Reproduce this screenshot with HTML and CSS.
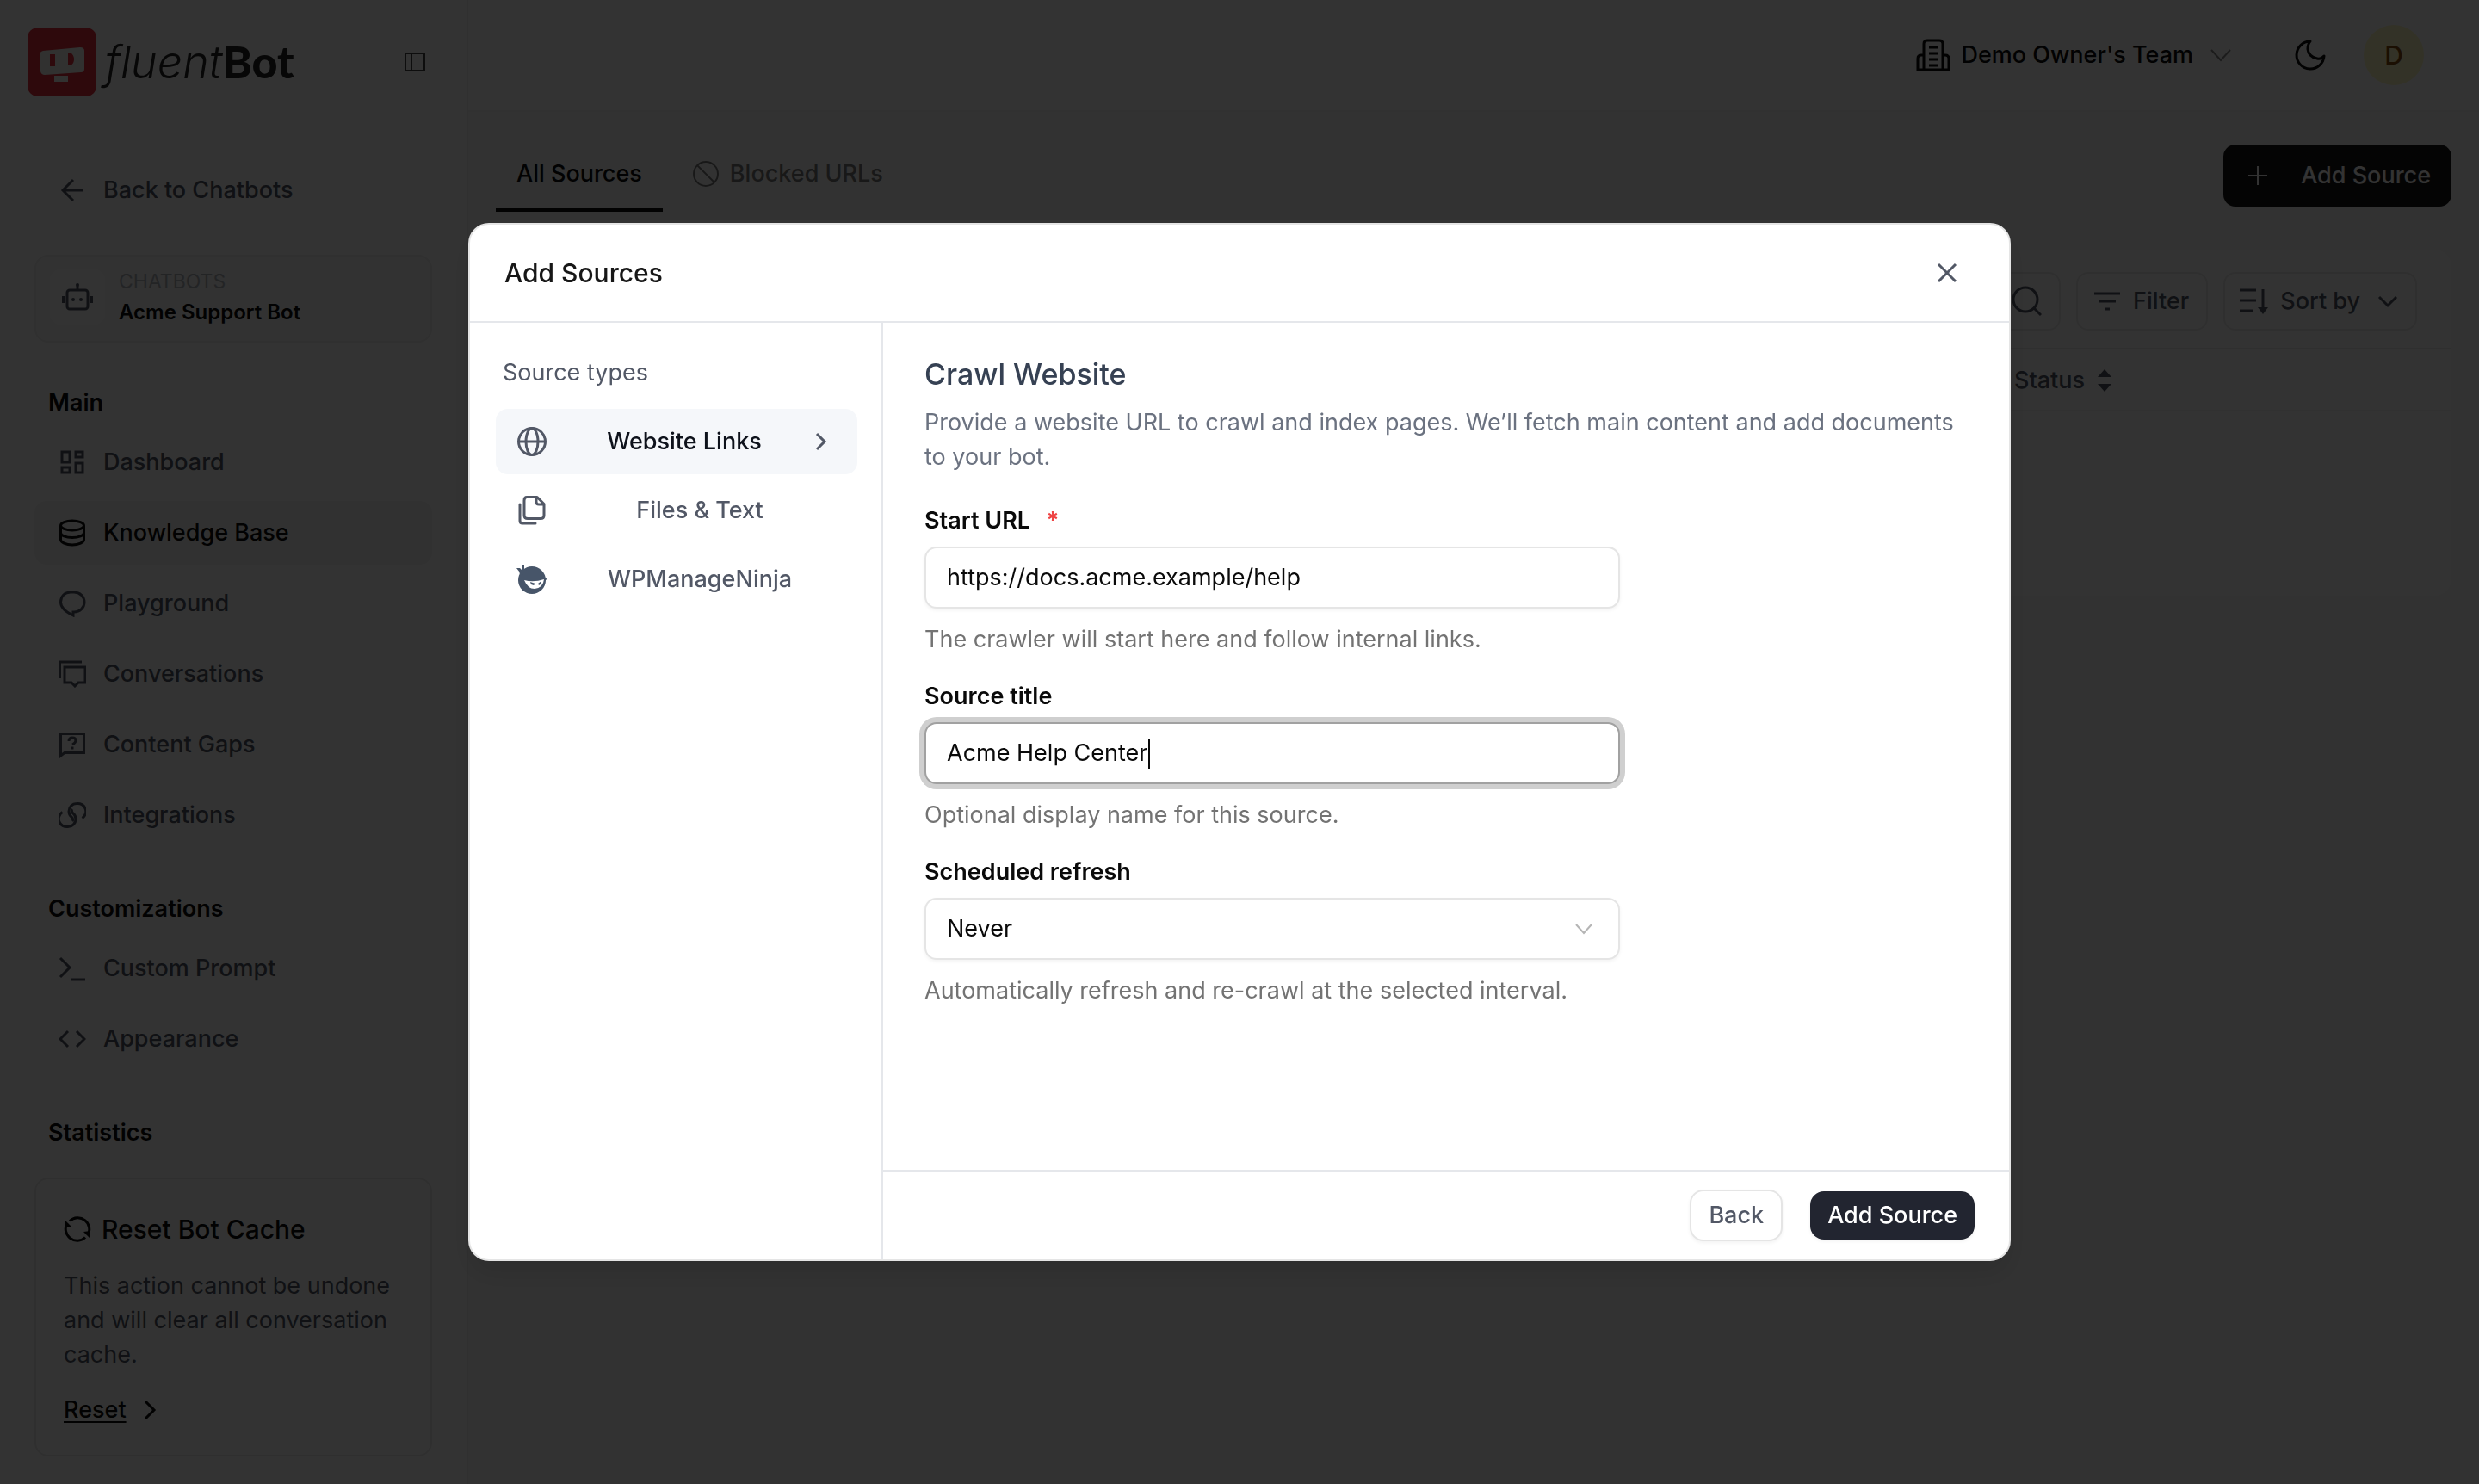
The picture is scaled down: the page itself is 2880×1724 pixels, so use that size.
FILE: index.html
```html
<!DOCTYPE html>
<html lang="en">
<head>
<meta charset="utf-8">
<title>fluentBot – Knowledge Base</title>
<link rel="stylesheet" href="styles.css">
</head>
<body>
<div class="app">
  <aside class="sidebar">
    <div class="brand">
      <svg class="brand-mark" viewBox="0 0 80 80" aria-hidden="true">
        <rect width="80" height="80" rx="12" fill="#e5303c"/>
        <path fill="#f3f6f1" d="M18 27 61 23q5 0 5 4v21q0 4-4 4L20 55q-4 0-5-4l-1-19q0-4 4-5zM31 56h16v7H31z"/>
        <path fill="#e5303c" d="M26 31h6v14h-6zM47 29h3q4 3 4 8t-4 7h-3z"/>
      </svg>
      <span class="brand-name"><i>fluent</i><b>Bot</b></span>
      <button class="icon-button" type="button" aria-label="Collapse sidebar">
        <svg class="collapse-icon" viewBox="0 0 24 24" fill="none" stroke="currentColor" stroke-width="2"><path d="M1 2h22v20H1zM8 2v20"/></svg>
      </button>
    </div>

    <a class="nav-item back-link" href="#">
      <svg class="icon" viewBox="0 0 32 32" fill="none" stroke="currentColor" stroke-width="3"><path d="M29 16H5M17 4 5 16l12 12"/></svg>
      Back to Chatbots
    </a>

    <a class="bot-card" href="#">
      <span class="bot-tile">
        <svg class="bot-icon" viewBox="0 0 36 36" fill="none" stroke="currentColor" stroke-width="3"><rect x="6" y="10" width="24" height="22" rx="3"/><path d="M18 10V5M1.500 17v8M34.500 17v8"/><g fill="currentColor" stroke="none"><circle cx="18" cy="4" r="2"/><circle cx="13" cy="21" r="2"/><circle cx="22" cy="21" r="2"/></g></svg>
      </span>
      <span class="bot-text"><span class="bot-kind">CHATBOTS</span><span class="bot-name">Acme Support Bot</span></span>
    </a>

    <nav class="nav" aria-label="Chatbot">
      <h2 class="nav-title">Main</h2>
      <a class="nav-item" href="#">
        <svg class="icon" viewBox="0 0 32 32" fill="none" stroke="currentColor" stroke-width="3"><path d="M4 4h9v12H4zM20 4h8v6h-8zM20 17h8v11h-8zM4 22h9v6H4z"/></svg>
        Dashboard
      </a>
      <a class="nav-item active" href="#" aria-current="page">
        <svg class="icon" viewBox="0 0 32 32" fill="none" stroke="currentColor" stroke-width="3"><ellipse cx="16" cy="7.500" rx="13.500" ry="5.500"/><path d="M2.500 8v16c0 3 6 6 13.500 6s13.500-3 13.500-6V8M2.500 16c0 3 6 5.500 13.500 5.500S29.500 19 29.500 16"/></svg>
        Knowledge Base
      </a>
      <a class="nav-item" href="#">
        <svg class="icon" viewBox="0 0 32 32" fill="none" stroke="currentColor" stroke-width="3"><path d="M17 30v-4h1c7 0 12-5 12-11.500S25 3 18 3h-4C7 3 2.500 8 2.500 14.500c0 7 6 11.500 14.500 15.500z"/></svg>
        Playground
      </a>
      <a class="nav-item" href="#">
        <svg class="icon" viewBox="0 0 32 32" fill="none" stroke="currentColor" stroke-width="3"><path d="M1.500 21V2H27M7 8h24v18h-8l-4 4-4-4H7z"/></svg>
        Conversations
      </a>
      <a class="nav-item" href="#">
        <svg class="icon" viewBox="0 0 32 32" fill="none" stroke="currentColor" stroke-width="3"><path d="M2.500 29V3.500h27v22H7zM12 12q0-4 4-4t4 3-4 5"/><path d="M16 18.500v3"/></svg>
        Content Gaps
      </a>
      <a class="nav-item" href="#">
        <svg class="icon" viewBox="0 0 32 32" fill="none" stroke="currentColor" stroke-width="3"><path d="M27.500 19.500A9.300 9.300 0 0 0 21 2.500c-5 0-9 4-9 9 0 3 1 5 3 6.500 2 1.500 2 4 1 5"/><path d="M4.500 12.500A9.300 9.300 0 0 0 11 29.500c5 0 9-4 9-9 0-3-1-5-3-6.500-2-1.500-2-4-1-5"/></svg>
        Integrations
      </a>
      <h2 class="nav-title">Customizations</h2>
      <a class="nav-item" href="#">
        <svg class="icon" viewBox="0 0 32 32" fill="none" stroke="currentColor" stroke-width="3"><path d="M2 4l11 11L2 26M15 29h16"/></svg>
        Custom Prompt
      </a>
      <a class="nav-item" href="#">
        <svg class="icon" viewBox="0 0 32 32" fill="none" stroke="currentColor" stroke-width="3"><path d="M11 7 2 16l9 9M21 7l9 9-9 9"/></svg>
        Appearance
      </a>
      <h2 class="nav-title">Statistics</h2>
    </nav>

    <section class="cache-card">
      <h3 class="cache-title">
        <svg class="icon" viewBox="0 0 32 32" fill="none" stroke="currentColor" stroke-width="3"><path d="M7 6.500A13.500 13.500 0 0 1 28 23M25 25.500A13.500 13.500 0 0 1 4 9"/><path d="M1 14l1-8 7 7zM31 18l-1 8-7-7z" fill="currentColor" stroke="none"/></svg>
        Reset Bot Cache
      </h3>
      <p class="cache-text">This action cannot be undone and will clear all conversation cache.</p>
      <a class="cache-link" href="#"><span class="underlined">Reset</span>
        <svg class="chevron" viewBox="0 0 24 24" fill="none" stroke="currentColor" stroke-width="3"><path d="M6 2l10 10L6 22"/></svg>
      </a>
    </section>
  </aside>

  <div class="page">
    <header class="topbar">
      <button class="team" type="button">
        <svg class="team-icon" viewBox="0 0 40 40" fill="none" stroke="currentColor" stroke-width="3"><path d="M9 37V7q0-4 4-4h14q4 0 4 4v30M9 20H6q-4 0-4 4v13h36V24q0-4-4-4h-3M15 11h10M15 18h10M15 25h10M15 32h10"/></svg>
        Demo Owner's Team
        <svg class="chevron faded" viewBox="0 0 24 24" fill="none" stroke="currentColor" stroke-width="2"><path d="M1 6l11 12L23 6"/></svg>
      </button>
      <button class="icon-button" type="button" aria-label="Dark mode">
        <svg class="moon" viewBox="0 0 36 36" fill="none" stroke="currentColor" stroke-width="3" stroke-linejoin="round"><path d="M18 2A16 16 0 1 0 34 19q-3 4-8 3Q16 20 15 11q0-6 3-9z"/></svg>
      </button>
      <button class="avatar" type="button" aria-label="Account">D</button>
    </header>

    <main class="content">
      <div class="tab-row">
        <div class="tabs">
          <a class="tab current" href="#">All Sources</a>
          <a class="tab" href="#">
            <svg class="icon" viewBox="0 0 32 32" fill="none" stroke="currentColor" stroke-width="2"><circle cx="16" cy="16" r="14"/><path d="M6 6l20 20"/></svg>
            Blocked URLs
          </a>
        </div>
        <button class="add-button" type="button">
          <svg class="chevron" viewBox="0 0 24 24" fill="none" stroke="currentColor" stroke-width="2"><path d="M12 1v22M1 12h22"/></svg>
          Add Source
        </button>
      </div>

      <section class="sources">
        <div class="toolbar">
          <button class="tool" type="button" aria-label="Search">
            <svg class="tool-icon" viewBox="0 0 36 36" fill="none" stroke="currentColor" stroke-width="3"><circle cx="17" cy="16" r="14"/><path d="M27 26l8 8"/></svg>
          </button>
          <button class="tool" type="button">
            <svg class="tool-icon" viewBox="0 0 36 36" fill="none" stroke="currentColor" stroke-width="3"><path d="M3 9h30M8 18h20M15 27h6"/></svg>
            Filter
          </button>
          <button class="tool" type="button">
            <svg class="tool-icon" viewBox="0 0 36 36" fill="none" stroke="currentColor" stroke-width="3"><path d="M1 5h19M1 17h19M1 29h15M28 4v24"/><path d="M22 25h12l-6 8z" fill="currentColor" stroke="none"/></svg>
            Sort by
            <svg class="chevron" viewBox="0 0 24 24" fill="none" stroke="currentColor" stroke-width="3"><path d="M2 7l10 10L22 7"/></svg>
          </button>
        </div>
        <table class="table">
          <thead><tr><th></th><th class="status-col">Status
            <svg class="sorter" viewBox="0 0 16 26" fill="currentColor"><path d="M8 0l8 9H0zM8 26l8-9H0z"/></svg></th></tr></thead>
        </table>
      </section>
    </main>
  </div>
</div>

<div class="overlay">
  <div class="dialog" role="dialog" aria-modal="true" aria-labelledby="dialog-title">
    <header class="dialog-head">
      <h1 class="dialog-title" id="dialog-title">Add Sources</h1>
      <button class="icon-button close" type="button" aria-label="Close">
        <svg class="chevron" viewBox="0 0 24 24" fill="none" stroke="currentColor" stroke-width="3"><path d="M2 2l20 20M22 2 2 22"/></svg>
      </button>
    </header>
    <div class="dialog-body">
      <div class="types">
        <p class="types-title">Source types</p>
        <button class="type selected" type="button">
          <svg class="type-icon" viewBox="0 0 36 36" fill="none" stroke="currentColor" stroke-width="3"><circle cx="18" cy="18" r="15.500"/><ellipse cx="18" cy="18" rx="7" ry="15.500"/><path d="M3 18h30"/></svg>
          <span class="type-label">Website Links</span>
          <svg class="chevron" viewBox="0 0 24 24" fill="none" stroke="currentColor" stroke-width="3"><path d="M7 3l9 9-9 9"/></svg>
        </button>
        <button class="type" type="button">
          <svg class="type-icon" viewBox="0 0 36 36" fill="none" stroke="currentColor" stroke-width="3" stroke-linecap="round" stroke-linejoin="round"><path d="M12 2.500h12l8 8v13q0 4-4 4H13q-4 0-4-4v-17q0-4 3-4zM23 3v5q0 3 3 3h5M4 11v19q0 3 3 3h15"/></svg>
          <span class="type-label">Files &amp; Text</span>
        </button>
        <button class="type" type="button">
          <svg class="type-icon" viewBox="0 0 36 36"><circle cx="18" cy="19" r="16" fill="#475569"/><path d="M0 5l4 0 3 3-3 2zM6 1l3 0 0 6-2 0zM3 11l5-5 4 1-5 6zM28 13l8 5-5 2z" fill="#475569"/><path d="M9 19q11 3 23-1-1 10-11 11Q13 29 9 19z" fill="#fff"/><path d="M16 21l6 2-2 2-3-1zM29 20l-4 3 1 2 3-2z" fill="#475569"/></svg>
          <span class="type-label">WPManageNinja</span>
        </button>
      </div>
      <form class="pane">
        <div class="pane-main">
          <h2 class="pane-title">Crawl Website</h2>
          <p class="pane-text">Provide a website URL to crawl and index pages. We’ll fetch main content and add documents to your bot.</p>
          <div class="field">
            <label class="label" for="url">Start URL <span class="required">*</span></label>
            <input class="control" id="url" type="text" value="https://docs.acme.example/help">
            <p class="hint">The crawler will start here and follow internal links.</p>
          </div>
          <div class="field">
            <label class="label" for="title">Source title</label>
            <div class="control-wrap">
              <input class="control focused" id="title" type="text" value="Acme Help Center">
              <span class="caret"></span>
            </div>
            <p class="hint">Optional display name for this source.</p>
          </div>
          <div class="field">
            <label class="label" for="refresh">Scheduled refresh</label>
            <div class="control-wrap">
              <select class="control" id="refresh"><option>Never</option></select>
              <svg class="select-arrow" viewBox="0 0 24 24" fill="none" stroke="currentColor" stroke-width="2"><path d="M3 7l9 10 9-10"/></svg>
            </div>
            <p class="hint">Automatically refresh and re-crawl at the selected interval.</p>
          </div>
        </div>
        <footer class="pane-foot">
          <button class="button" type="button">Back</button>
          <button class="button primary" type="submit">Add Source</button>
        </footer>
      </form>
    </div>
  </div>
</div>
</body>
</html>
```

FILE: styles.css
```css
*, *::before, *::after { box-sizing: border-box; }

body {
  margin: 0;
  font: 400 27px/40px Inter, "Liberation Sans", sans-serif;
  color: #0a0a0a;
  background: #fff;
}

h1, h2, h3, p { margin: 0; }
a { color: inherit; text-decoration: none; }
button, input, select { font: inherit; color: inherit; }
button { padding: 0; border: 0; background: none; }
svg { display: block; flex: none; }

.app { display: flex; height: 100vh; overflow: hidden; }

/* Sidebar */
.sidebar {
  width: 544px;
  flex: none;
  padding: 32px 40px;
  border-right: 2px solid #f0f0f0;
}
.brand { display: flex; align-items: center; height: 80px; margin: 0 8px 0 -8px; }
.brand-mark { width: 80px; height: 80px; margin-right: 10px; }
.brand-name { font: 300 52px/80px Inter, sans-serif; color: #262626; }
.brand-name b { font-family: Lato, sans-serif; font-weight: 900; }
.brand .icon-button { margin-left: auto; color: #404040; }
.icon-button { display: flex; align-items: center; justify-content: center; }
.collapse-icon { width: 24px; height: 24px; }

.icon { width: 32px; height: 32px; }
.chevron { width: 24px; height: 24px; }
.faded { color: #8a8a8a; }

.nav-item {
  display: flex;
  align-items: center;
  gap: 20px;
  height: 74px;
  padding: 0 28px;
  margin-bottom: 8px;
  border-radius: 14px;
  font-weight: 500;
  color: #525866;
}
.nav-item.active { background: #f5f5f5; color: #0a0a0a; }
.back-link { margin: 72px 0 38px; }

.bot-card {
  display: flex;
  align-items: center;
  gap: 16px;
  height: 102px;
  padding: 0 16px 4px;
  border: 2px solid #ededed;
  border-radius: 16px;
  background: #fafafa;
}
.bot-tile { display: flex; align-items: center; justify-content: center; width: 64px; height: 64px; border-radius: 12px; background: #fff; color: #525866; }
.bot-icon { width: 36px; height: 36px; }
.bot-text { display: flex; flex-direction: column; }
.bot-kind { font-size: 23px; line-height: 36px; color: #b0b4bb; }
.bot-name { font-size: 24px; line-height: 36px; font-weight: 600; }

.nav-title { padding: 0 16px; margin: 52px 0 12px; font-size: 27px; line-height: 40px; font-weight: 600; }
.nav-title:first-child { margin-top: 50px; }

.cache-card { margin-top: 32px; padding: 36px 32px 32px; border: 2px solid #ebebeb; border-radius: 16px; }
.cache-title { display: flex; align-items: center; gap: 12px; font-size: 30px; line-height: 44px; font-weight: 500; }
.cache-text { margin: 24px 0; color: #525866; }
.cache-link { display: flex; align-items: center; gap: 16px; font-weight: 500; }
.underlined { text-decoration: underline; text-underline-offset: 4px; }

/* Page */
.page { flex: 1; min-width: 0; background: #fafafa; }
.topbar {
  display: flex;
  align-items: center;
  justify-content: flex-end;
  height: 130px;
  padding: 0 64px;
  background: #fff;
  border-bottom: 2px solid #f5f5f5;
}
.team { display: flex; align-items: center; gap: 12px; font-weight: 500; }
.team-icon { width: 40px; height: 40px; }
.team .chevron { margin-left: 8px; }
.moon { width: 36px; height: 36px; margin: 0 44px 0 74px; }
.avatar { width: 70px; height: 70px; border-radius: 50%; background: #fef9c3; color: #854d0e; font-size: 30px; font-weight: 500; }

.content { padding: 32px; }
.tab-row { display: flex; align-items: center; justify-content: space-between; }
.tabs { display: flex; gap: 10px; }
.tab { display: flex; align-items: center; gap: 12px; padding: 20px 24px; border-bottom: 4px solid transparent; font-weight: 500; color: #7b7b7b; }
.tab.current { color: #0a0a0a; border-color: #0a0a0a; }
.add-button { display: flex; align-items: center; gap: 38px; height: 72px; padding: 0 24px 0 28px; border-radius: 14px; background: #171717; color: #fff; font-weight: 500; }

.sources { min-height: 402px; margin-top: 44px; border-radius: 20px; background: #fff; }
.toolbar { display: flex; justify-content: flex-end; gap: 18px; padding: 26px 40px 20px; border-bottom: 2px solid #e8e8e8; }
.tool { display: flex; align-items: center; gap: 12px; height: 68px; padding: 0 20px 0 16px; border: 2px solid #ebebeb; border-radius: 14px; font-weight: 500; color: #525866; }
.tool-icon { width: 36px; height: 36px; }
.tool .chevron { margin-left: 8px; }
.table { width: 100%; border-collapse: collapse; table-layout: fixed; }
.table th { padding: 16px 0 14px; text-align: left; font-weight: 500; color: #525866; border-bottom: 2px solid #f5f5f5; }
.status-col { width: 508px; }
.sorter { display: inline-block; width: 16px; height: 26px; margin-left: 8px; vertical-align: -4px; }

/* Dialog */
.overlay { position: fixed; inset: 0; display: flex; align-items: center; justify-content: center; background: rgba(0, 0, 0, .8); }
.dialog {
  display: flex;
  flex-direction: column;
  width: 1792px;
  max-width: 96vw;
  height: 70vh;
  overflow: hidden;
  border: 2px solid #e5e5e5;
  border-radius: 24px;
  background: #fff;
  box-shadow: 0 16px 32px rgba(0, 0, 0, .1);
}
.dialog-head { display: flex; align-items: center; justify-content: space-between; padding: 34px 60px 34px 40px; border-bottom: 2px solid #e5e7eb; }
.dialog-title { font-size: 30px; line-height: 44px; font-weight: 500; color: #171717; }
.close { color: #525866; }
.dialog-body { display: flex; flex: 1; min-height: 0; }

.types { display: flex; flex-direction: column; gap: 4px; width: 480px; flex: none; padding: 38px 28px 0 30px; border-right: 2px solid #e5e7eb; }
.types-title { padding: 0 8px; margin-bottom: 18px; color: #525866; }
.type { display: flex; align-items: center; height: 76px; padding: 0 24px; border-radius: 14px; font-weight: 500; color: #525866; }
.type.selected { background: #f5f7fa; }
.type.selected .type-label { color: #0e121b; }
.type-icon { width: 36px; height: 36px; margin-right: 18px; }
.type-label { flex: 1; text-align: center; }
.type .chevron { margin: 0 6px; }

.pane { display: flex; flex: 1; flex-direction: column; min-width: 0; }
.pane-main { flex: 1; padding: 38px 48px 0; }
.pane-title { font-size: 34px; line-height: 44px; font-weight: 500; color: #364153; }
.pane-text { margin: 14px 0 34px; color: #6b7280; }
.field { display: flex; flex-direction: column; max-width: 808px; margin-bottom: 26px; }
.label { margin-bottom: 10px; font-weight: 600; }
.required { margin-left: 12px; color: #ef4444; }
.control-wrap { position: relative; }
.control {
  display: block;
  width: 100%;
  height: 72px;
  padding: 0 24px;
  border: 2px solid #e5e5e5;
  border-radius: 14px;
  outline: 0;
  background: #fff;
  box-shadow: 0 2px 4px rgba(0, 0, 0, .05);
  appearance: none;
}
.control.focused { border-color: #a1a1a1; box-shadow: 0 0 0 6px #cfcfcf; }
.caret { position: absolute; top: 20px; left: 260px; width: 2px; height: 34px; background: #0a0a0a; }
.select-arrow { position: absolute; top: 24px; right: 30px; width: 24px; height: 24px; color: #b5b5b5; }
.hint { margin-top: 16px; color: #737373; }

.pane-foot { display: flex; align-items: center; justify-content: flex-end; gap: 32px; padding: 21px 40px; border-top: 2px solid #e5e7eb; }
.button { height: 60px; padding: 0 20px; border: 2px solid #e5e5e5; border-radius: 16px; background: #fff; color: #525866; font-weight: 500; box-shadow: 0 2px 4px rgba(0, 0, 0, .05); }
.button.primary { height: 56px; border: 0; background: #222530; color: #fff; }
```
